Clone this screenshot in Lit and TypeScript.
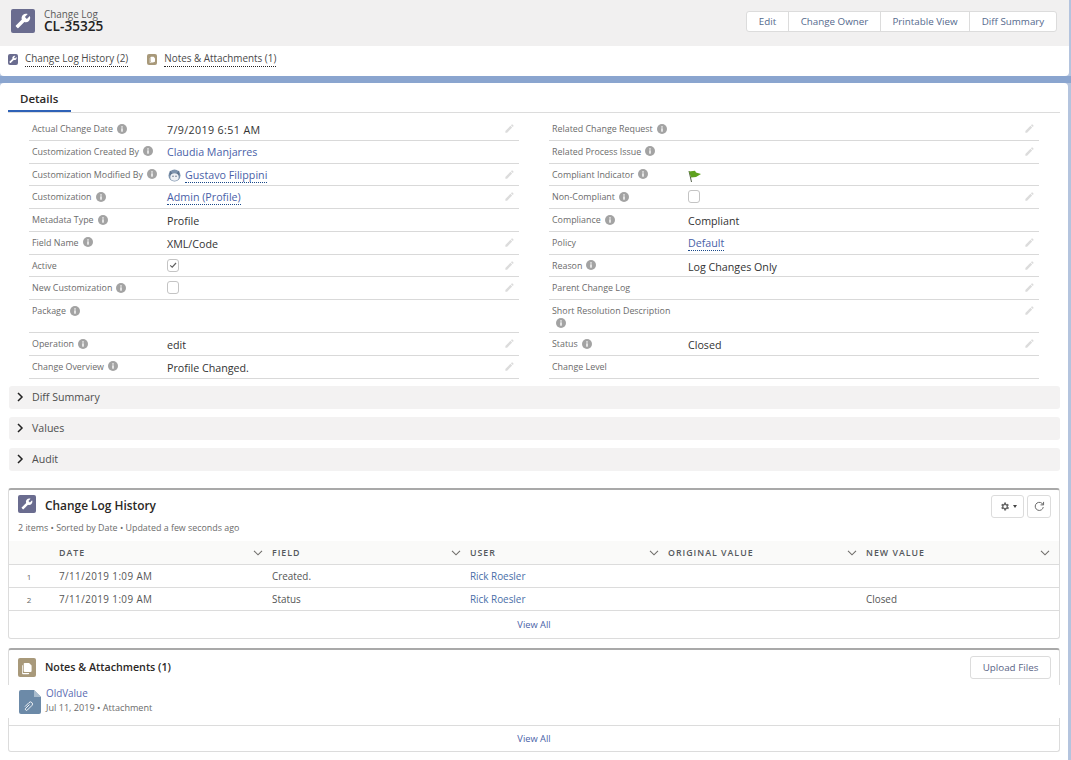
import { LitElement, html, css, svg, nothing } from "lit";
import { customElement } from "lit/decorators.js";

const wrench = svg`<path transform="translate(24 0) scale(-1 1)" d="M22.7 19l-9.1-9.1c.9-2.3.4-5-1.5-6.9-2-2-5-2.4-7.4-1.3L9 6 6 9 1.6 4.7C.4 7.1.9 10.1 2.9 12.1c1.9 1.9 4.6 2.4 6.9 1.5l9.1 9.1c.4.4 1 .4 1.4 0l2.3-2.3c.5-.4.5-1.1.1-1.4z"/>`;
const wrenchIcon = (cls: string) => html`<span class="ic ${cls}"><svg viewBox="0 0 24 24" fill="#fff">${wrench}</svg></span>`;
const notesIcon = (cls: string) => html`<span class="ic notes ${cls}"><svg viewBox="0 0 24 24" fill="#fff"><path d="M9 4h7l4 4v9a1.500 1.500 0 0 1-1.500 1.500H9A1.500 1.500 0 0 1 7.500 17V5.500A1.500 1.500 0 0 1 9 4z"/><path d="M5 7.500h1.200V19a1 1 0 0 0 1 1H16v.8a1.200 1.200 0 0 1-1.200 1.200H6.200A1.200 1.200 0 0 1 5 20.800z"/></svg></span>`;
const info = html`<svg class="info" viewBox="0 0 10 10"><circle cx="5" cy="5" r="5" fill="#a3a3a3"/><rect x="4.300" y="4.300" width="1.400" height="3.400" fill="#fff"/><rect x="4.300" y="2.300" width="1.400" height="1.300" fill="#fff"/></svg>`;
const pencil = html`<svg class="pencil" viewBox="0 0 24 24" fill="#dcdcdc"><path d="M3 17.250V21h3.750L17.810 9.940l-3.750-3.750L3 17.250zM20.710 7.040c.39-.39.39-1.020 0-1.410l-2.340-2.340c-.39-.39-1.020-.39-1.410 0l-1.830 1.830 3.750 3.750 1.830-1.830z"/></svg>`;
const chevronDown = html`<svg class="chev" viewBox="0 0 10 6" fill="none" stroke="#706e6b" stroke-width="1.100"><path d="M1 .8l4 4 4-4"/></svg>`;

type Row = {
  label: string; info?: boolean; edit?: boolean; value?: string; wide?: boolean;
  link?: boolean; dotted?: boolean; kind?: "check" | "box" | "flag" | "avatar"; tall?: boolean;
};

const left: Row[] = [
  { label: "Actual Change Date", info: true, edit: true, value: "7/9/2019 6:51 AM", wide: true },
  { label: "Customization Created By", info: true, value: "Claudia Manjarres", link: true },
  { label: "Customization Modified By", info: true, edit: true, value: "Gustavo Filippini", link: true, dotted: true, kind: "avatar" },
  { label: "Customization", info: true, edit: true, value: "Admin (Profile)", link: true, dotted: true },
  { label: "Metadata Type", info: true, value: "Profile" },
  { label: "Field Name", info: true, edit: true, value: "XML/Code" },
  { label: "Active", edit: true, kind: "check" },
  { label: "New Customization", info: true, edit: true, kind: "box" },
  { label: "Package", info: true, tall: true },
  { label: "Operation", info: true, edit: true, value: "edit" },
  { label: "Change Overview", info: true, edit: true, value: "Profile Changed." },
];
const right: Row[] = [
  { label: "Related Change Request", info: true, edit: true },
  { label: "Related Process Issue", info: true, edit: true },
  { label: "Compliant Indicator", info: true, kind: "flag" },
  { label: "Non-Compliant", info: true, edit: true, kind: "box" },
  { label: "Compliance", info: true, value: "Compliant" },
  { label: "Policy", edit: true, value: "Default", link: true, dotted: true },
  { label: "Reason", info: true, edit: true, value: "Log Changes Only" },
  { label: "Parent Change Log", edit: true },
  { label: "Short Resolution Description", info: true, edit: true, tall: true },
  { label: "Status", info: true, edit: true, value: "Closed" },
  { label: "Change Level" },
];
const history = [
  { n: 1, date: "7/11/2019 1:09 AM", field: "Created.", user: "Rick Roesler", nv: "" },
  { n: 2, date: "7/11/2019 1:09 AM", field: "Status", user: "Rick Roesler", nv: "Closed" },
];

@customElement("app-root")
export class AppRoot extends LitElement {
  static styles = css`
    :host { display: block; width: 1071px; height: 760px; overflow: hidden;
      background: linear-gradient(#8aa5cf, #8aa5cf) 0 76px / 100% 7px no-repeat, #b4c4de;
      font-family: "Open Sans", "Liberation Sans", sans-serif; color: #2b2826; }
    svg { display: block; }
    .ic { display: inline-flex; align-items: center; justify-content: center; background: #6a6c8f; border-radius: 2px; flex: none; }
    .ic.notes { background: #a8997a; }
    .ic svg { width: 66%; height: 66%; }
    .ic.lg { width: 24px; height: 24px; }
    .ic.sm { width: 10px; height: 11px; }
    .ic.sm svg { width: 80%; height: 80%; }
    .ic.md { width: 18px; height: 18px; }
    .ic.notes.md { height: 19px; }
    .ic.notes.md svg, .ic.notes.sm svg { width: 84%; height: 84%; }
    .top { background: #fff; height: 76px; margin-right: 2px; border-radius: 0 0 4px 4px; }
    .hdr { height: 46px; background: #f1f0f0; display: flex; align-items: flex-start; padding: 9px 12px 0 11px; box-sizing: border-box; }
    .hdr-t { margin-left: 9px; display: flex; flex-direction: column; flex: 1; }
    .hdr-t small { font-size: 9.900px; line-height: 10px; color: #5a5a5a; margin-top: -.5px; }
    .hdr-t b { font-size: 13.600px; line-height: 13px; font-weight: 600; color: #222; }
    .btns { display: flex; margin-top: 2px; height: 21px; background: #fff; border: 1px solid #dcdcdc; border-radius: 3px; box-sizing: border-box; }
    .btns span { font-size: 9.800px; color: #54698d; display: flex; align-items: center; justify-content: center; border-left: 1px solid #dcdcdc; box-sizing: border-box; }
    .btns span:first-child { border-left: 0; }
    .b1 { width: 41px; } .b2 { width: 92px; } .b3 { width: 89px; } .b4 { width: 87px; }
    .links { display: flex; padding: 8px 0 0 8px; }
    .lnk { display: flex; align-items: flex-start; margin-right: 19px; }
    .lnk span:last-child { margin-left: 7px; font-size: 9.900px; line-height: 12px; color: #4a4a4a; border-bottom: 1px dotted #222; padding-bottom: 2px; margin-top: -2px; }
    .main { background: #fff; margin: 7px 3px 0 0; height: 677px; border-radius: 4px 4px 0 0; padding: 0 8px; box-sizing: border-box; }
    .tabs { height: 30px; border-bottom: 1px solid #dcdcdc; box-sizing: border-box; display: flex; width: 1052px; }
    .tab { width: 63px; box-sizing: border-box; height: 29px; padding: 8px 0 0 12px; font-size: 11.500px; line-height: 15px; font-weight: 600; color: #2b2826; border-bottom: 2px solid #2e62b7; }
    .cols { display: flex; gap: 30px; padding: 5px 0 0 21px; }
    .col { width: 490px; }
    .row { display: flex; height: 22.750px; border-bottom: 1px solid #d9d9d9; box-sizing: border-box; }
    .row.tall { height: 33px; }
    .lab { width: 138px; flex: none; padding: 5px 5px 0 3px; box-sizing: border-box; font-size: 8.900px; line-height: 12px; color: #6b6b6b; }
    .col.r .lab { width: 139px; }
    .lab .info { display: inline-block; width: 10px; height: 10px; vertical-align: -1.500px; margin-left: 4px; }
    .val { flex: 1; font-size: 10.700px; line-height: 14px; padding-top: 5px; color: #333; display: flex; align-items: flex-start; min-width: 0; }
    .val.wide { letter-spacing: .37px; }
    .val a { color: #4a5fa8; text-decoration: none; line-height: 13px; }
    .val a.dot { border-bottom: 1px dotted #1b4a8a; }
    .val .avatar { width: 13px; height: 14px; margin: -1px 4px 0 1px; }
    .box { width: 12px; height: 13px; border: 1px solid #c4c4c4; border-radius: 3px; box-sizing: border-box; margin-top: -1px; display: flex; align-items: center; justify-content: center; background: #fff; }
    .box svg { width: 8px; height: 8px; }
    .flag { width: 14px; height: 13px; margin-top: 1px; }
    .row .pencil { width: 11px; height: 11px; margin: 5px 4px 0 0; flex: none; }
    .sec { display: flex; align-items: center; height: 23px; margin: 0 0 8px 1px; width: 1051px; background: #f3f2f2; border-radius: 3px; font-size: 10.600px; color: #4e4e4e; box-sizing: border-box; padding: 0 0 2px 7px; }
    .sec svg { width: 8px; height: 10px; margin-right: 8px; }
    .secs { margin-top: 7.500px; }
    .card { width: 1052px; border: 1px solid #dcdcdc; border-top: 2px solid #a9a9a9; border-radius: 3px; box-sizing: border-box; }
    .c1 { height: 151px; margin-top: 17px; }
    .c2 { height: 104px; margin-top: 9px; }
    .c-head { display: flex; align-items: flex-start; padding: 5px 8px 0 9px; height: 36px; box-sizing: border-box; }
    .c2 .c-head { padding-top: 8px; }
    .c-head h2 { margin: .5px 0 0 9px; font-size: 11.900px; line-height: 18px; font-weight: 600; color: #2b2826; flex: 1; }
    .c2 .c-head h2 { margin-top: 0; font-size: 10.700px; }
    .tool { height: 23px; border: 1px solid #dcdcdc; border-radius: 3px; display: flex; align-items: center; justify-content: center; box-sizing: border-box; background: #fff; }
    .t-gear { width: 33px; margin-right: 3px; }
    .t-gear svg { width: 11px; height: 11px; }
    .t-gear i { width: 0; height: 0; border: 2px solid transparent; border-top: 3px solid #444; margin: 2px 0 0 3px; }
    .t-ref { width: 24px; }
    .t-ref svg { width: 13px; height: 13px; }
    .sub { font-size: 8.900px; line-height: 11px; color: #6b6b6b; padding-left: 9px; height: 19px; margin-top: -4px; white-space: nowrap; }
    .tb { display: grid; grid-template-columns: 50px 213px 198px 198px 198px 1fr; }
    .th { height: 24px; background: #fafaf9; border-bottom: 1px solid #dcdcdc; box-sizing: border-box; display: flex; align-items: center; justify-content: space-between; padding-right: 9px; font-size: 8.800px; font-weight: 600; letter-spacing: 1px; color: #54585c; white-space: nowrap; }
    .th .chev { width: 10px; height: 6px; }
    .td { height: 23px; border-bottom: 1px solid #dcdcdc; box-sizing: border-box; font-size: 9.900px; color: #555; display: flex; align-items: center; }
    .td.n { justify-content: center; padding-right: 10px; font-size: 8px; color: #666; }
    .td.d { letter-spacing: .4px; }
    .td a { color: #4a6fa8; }
    .all { height: 26px; display: flex; align-items: center; justify-content: center; font-size: 9.300px; color: #4a5fa8; }
    .up { width: 81px; height: 23px; margin-top: -2px; font-size: 9.800px; color: #5a6486; }
    .att { display: flex; margin: -1px -1px 7px; padding: 2px 0 0 11px; height: 33px; background: #fff; box-sizing: border-box; position: relative; }
    .att svg { width: 22px; height: 24px; margin-top: 3px; }
    .att div { margin-left: 5px; }
    .att a { display: block; font-size: 9.900px; line-height: 13px; color: #5a6ab0; }
    .att p { margin: 1px 0 0; font-size: 9.100px; line-height: 13px; color: #6b6b6b; white-space: nowrap; }
    .c2 .all { border-top: 1px solid #dcdcdc; height: 25px; }
  `;

  private rowT(r: Row) {
    return html`<div class="row ${r.tall ? "tall" : ""}">
      <div class="lab">${r.label}${r.info ? info : nothing}</div>
      <div class="val ${r.wide ? "wide" : ""}">${this.valueT(r)}</div>
      ${r.edit ? pencil : nothing}
    </div>`;
  }

  private valueT(r: Row) {
    if (r.kind === "check") return html`<span class="box"><svg viewBox="0 0 10 10" fill="none" stroke="#5f5f5f" stroke-width="1.400"><path d="M1.500 5.500l2.500 2.300L8.800 2.500"/></svg></span>`;
    if (r.kind === "box") return html`<span class="box"></span>`;
    if (r.kind === "flag") return html`<svg class="flag" viewBox="0 0 14 13"><path d="M1 1l2.500 11" stroke="#55604a" stroke-width="1" fill="none"/><path d="M1 1.500l6-.8 1 1.800L13 4 8 7 3 7.500z" fill="#5fa11e"/></svg>`;
    const av = r.kind === "avatar" ? html`<svg class="avatar" viewBox="0 0 13 14"><circle cx="6.500" cy="7.500" r="6" fill="#7d93ad"/><path d="M2 2.500l2 2.500h5l2-2.500.5 5h-10z" fill="#5f7590"/><ellipse cx="6.500" cy="9" rx="4.200" ry="3.800" fill="#eef1f5"/><circle cx="5" cy="8.300" r=".7" fill="#54647a"/><circle cx="8" cy="8.300" r=".7" fill="#54647a"/></svg>` : nothing;
    if (r.link) return html`${av}<a class=${r.dotted ? "dot" : ""}>${r.value}</a>`;
    return html`${r.value ?? ""}`;
  }

  private secT(t: string) {
    return html`<div class="sec"><svg viewBox="0 0 8 10" fill="none" stroke="#222" stroke-width="1.500"><path d="M2 1l4 4-4 4"/></svg>${t}</div>`;
  }

  render() {
    return html`
      <div class="top">
        <div class="hdr">
          ${wrenchIcon("lg")}
          <div class="hdr-t"><small>Change Log</small><b>CL-35325</b></div>
          <div class="btns">
            <span class="b1">Edit</span><span class="b2">Change Owner</span><span class="b3">Printable View</span><span class="b4">Diff Summary</span>
          </div>
        </div>
        <div class="links">
          <div class="lnk">${wrenchIcon("sm")}<span>Change Log History (2)</span></div>
          <div class="lnk">${notesIcon("sm")}<span>Notes &amp; Attachments (1)</span></div>
        </div>
      </div>
      <div class="main">
        <div class="tabs"><div class="tab">Details</div></div>
        <div class="cols">
          <div class="col">${left.map((r) => this.rowT(r))}</div>
          <div class="col r">${right.map((r) => this.rowT(r))}</div>
        </div>
        <div class="secs">${["Diff Summary", "Values", "Audit"].map((t) => this.secT(t))}</div>
        <div class="card c1">
          <div class="c-head">
            ${wrenchIcon("md")}
            <h2>Change Log History</h2>
            <div class="tool t-gear"><svg viewBox="0 0 24 24" fill="#666"><path d="M19.400 13c.1-.3.1-.7.1-1s0-.7-.1-1l2.100-1.600-2-3.500-2.500 1c-.5-.4-1.100-.7-1.700-1L15.400 3.300h-4l-.4 2.600c-.6.300-1.200.6-1.700 1l-2.500-1-2 3.500L6.900 11c-.1.300-.1.700-.1 1s0 .7.100 1l-2.100 1.600 2 3.500 2.500-1c.5.400 1.100.7 1.700 1l.4 2.600h4l.4-2.600c.6-.3 1.200-.6 1.700-1l2.500 1 2-3.500zM13.200 15.500a3.500 3.500 0 1 1 0-7 3.500 3.500 0 0 1 0 7z"/></svg><i></i></div>
            <div class="tool t-ref"><svg viewBox="0 0 24 24" fill="none" stroke="#666" stroke-width="1.800"><path d="M19 13a7.500 7.500 0 1 1-2.400-6.800L19 8.500"/><path d="M19.500 3.500v5.500H14" /></svg></div>
          </div>
          <div class="sub">2 items • Sorted by Date • Updated a few seconds ago</div>
          <div class="tb">
            <div class="th"></div>
            ${["DATE", "FIELD", "USER", "ORIGINAL VALUE", "NEW VALUE"].map((h) => html`<div class="th"><span>${h}</span>${chevronDown}</div>`)}
            ${history.map((r) => html`
              <div class="td n">${r.n}</div><div class="td d">${r.date}</div><div class="td">${r.field}</div>
              <div class="td"><a>${r.user}</a></div><div class="td"></div><div class="td">${r.nv}</div>`)}
          </div>
          <div class="all">View All</div>
        </div>
        <div class="card c2">
          <div class="c-head">
            ${notesIcon("md")}
            <h2>Notes &amp; Attachments (1)</h2>
            <div class="tool up">Upload Files</div>
          </div>
          <div class="att">
            <svg viewBox="0 0 22 24"><path d="M2 0h13l7 7v15a2 2 0 0 1-2 2H2a2 2 0 0 1-2-2V2a2 2 0 0 1 2-2z" fill="#6c8aa8"/><path d="M15 0l7 7h-7z" fill="#a9bccd"/><path d="M10.500 14.500l-3.800 3.800a1.200 1.200 0 0 0 1.700 1.700l4.500-4.500a2 2 0 0 0-2.900-2.900l-4 4" fill="none" stroke="#fff" stroke-width=".9"/></svg>
            <div><a>OldValue</a><p>Jul 11, 2019 • Attachment</p></div>
          </div>
          <div class="all">View All</div>
        </div>
      </div>
    `;
  }
}
